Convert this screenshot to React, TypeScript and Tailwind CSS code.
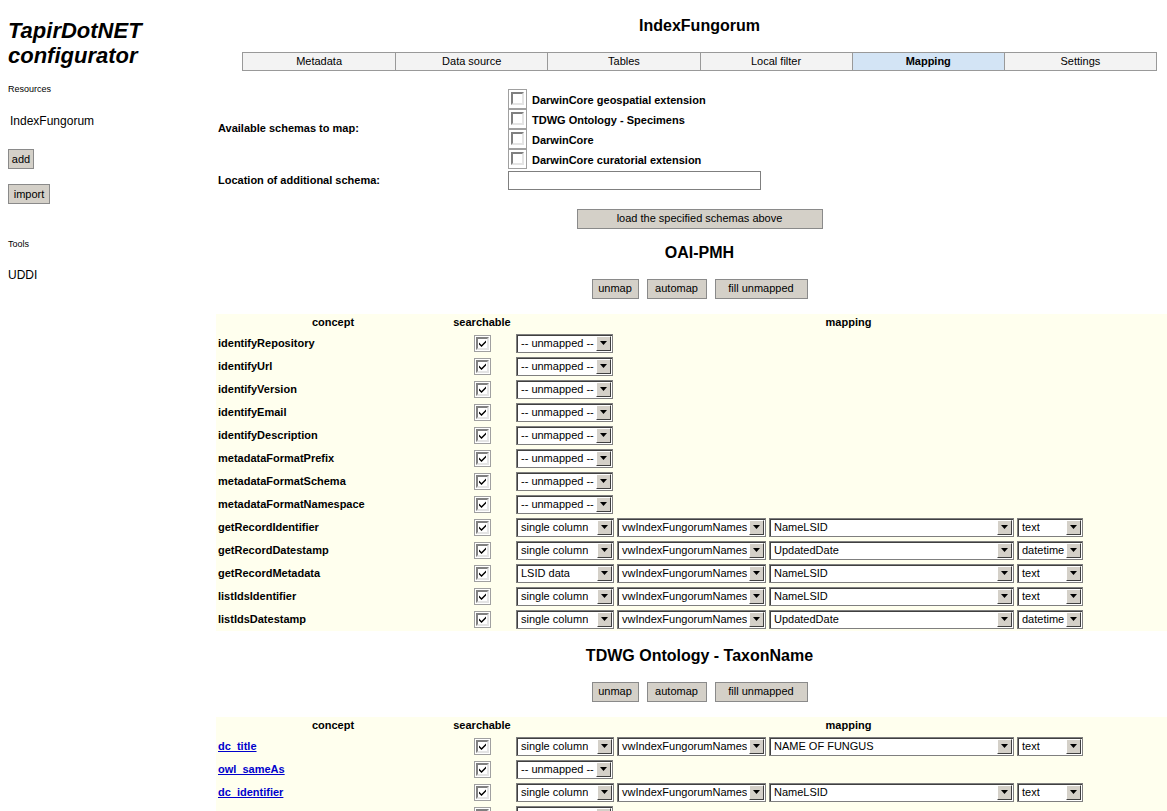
import React from 'react';

type Row = {
  name: string;
  link?: boolean;
  map?: [string, string, string, string];
  empty?: string;
};

const VW = 'vwIndexFungorumNames';

const oaiRows: Row[] = [
  { name: 'identifyRepository' },
  { name: 'identifyUrl' },
  { name: 'identifyVersion' },
  { name: 'identifyEmail' },
  { name: 'identifyDescription' },
  { name: 'metadataFormatPrefix' },
  { name: 'metadataFormatSchema' },
  { name: 'metadataFormatNamespace' },
  { name: 'getRecordIdentifier', map: ['single column', VW, 'NameLSID', 'text'] },
  { name: 'getRecordDatestamp', map: ['single column', VW, 'UpdatedDate', 'datetime'] },
  { name: 'getRecordMetadata', map: ['LSID data', VW, 'NameLSID', 'text'] },
  { name: 'listIdsIdentifier', map: ['single column', VW, 'NameLSID', 'text'] },
  { name: 'listIdsDatestamp', map: ['single column', VW, 'UpdatedDate', 'datetime'] },
];

// last row sits at the bottom edge of the window, only its controls' tops show
const taxonRows: Row[] = [
  { name: 'dc_title', link: true, map: ['single column', VW, 'NAME OF FUNGUS', 'text'] },
  { name: 'owl_sameAs', link: true },
  { name: 'dc_identifier', link: true, map: ['single column', VW, 'NameLSID', 'text'] },
  { name: '', link: true, empty: '' },
];

const tabs = ['Metadata', 'Data source', 'Tables', 'Local filter', 'Mapping', 'Settings'];
const schemas = [
  'DarwinCore geospatial extension',
  'TDWG Ontology - Specimens',
  'DarwinCore',
  'DarwinCore curatorial extension',
];

function CheckMark() {
  return (
    <svg width="7" height="7" viewBox="0 0 7 7">
      <path d="M0 2.5L2.5 5L7 0.5V2.5L2.5 7L0 4.5Z" fill="#000" />
    </svg>
  );
}

function Checkbox({ checked }: { checked?: boolean }) {
  return (
    <span className="flex h-[17px] w-[17px] items-center justify-center border border-[#a0a0a0] bg-white">
      <span className="flex h-[13px] w-[13px] items-center justify-center border-2 border-t-[#808080] border-l-[#808080] border-r-[#e4e4e4] border-b-[#e4e4e4] bg-white">
        {checked && <CheckMark />}
      </span>
    </span>
  );
}

function Select({ value, w }: { value: string; w: string }) {
  return (
    <div className={`flex h-[19px] shrink-0 items-center border border-[#7f7f7f] bg-white shadow-[inset_1px_1px_0_#404040] ${w}`}>
      <span className="truncate pl-[4px] text-[11px] leading-none text-black">{value}</span>
      <span className="ml-auto mr-[1px] flex h-[15px] w-[15px] shrink-0 items-center justify-center border border-t-white border-l-white border-r-[#404040] border-b-[#404040] bg-[#d4d0c8]">
        <svg width="7" height="4" viewBox="0 0 7 4">
          <path d="M0 0H7L3.5 4Z" fill="#000" />
        </svg>
      </span>
    </div>
  );
}

function Button({ label, w }: { label: string; w: string }) {
  return (
    <button className={`h-[20px] border border-[#8a8a8a] bg-[#d4d0c8] text-[11px] text-black ${w}`}>
      {label}
    </button>
  );
}

function MappingTable({ rows }: { rows: Row[] }) {
  return (
    <div className="mt-[15px] bg-[#ffffee]">
      <div className="grid h-[18px] grid-cols-[234px_64px_1fr] items-center text-[11px] font-bold text-black">
        <span className="text-center">concept</span>
        <span className="text-center">searchable</span>
        <span className="text-center">mapping</span>
      </div>
      {rows.map((r, i) => (
        <div key={i} className="grid h-[23px] grid-cols-[234px_64px_1fr] items-center">
          <span className="pl-[2px] text-[11px] font-bold">
            {r.link ? <a href="#" className="text-[#0000cc] underline">{r.name}</a> : r.name}
          </span>
          <span className="flex justify-center">
            <Checkbox checked />
          </span>
          <div className="flex items-center gap-[3px] pl-[2px]">
            {r.map ? (
              <>
                <Select value={r.map[0]} w="w-[98px]" />
                <Select value={r.map[1]} w="w-[149px]" />
                <Select value={r.map[2]} w="w-[245px]" />
                <Select value={r.map[3]} w="w-[66px]" />
              </>
            ) : (
              <Select value={r.empty ?? '-- unmapped --'} w="w-[97px]" />
            )}
          </div>
        </div>
      ))}
    </div>
  );
}

function Section({ title, rows }: { title: string; rows: Row[] }) {
  return (
    <>
      <h2 className="h-[20px] text-center text-[16px] font-bold leading-[20px]">{title}</h2>
      <div className="mt-[16px] flex justify-center gap-[8px]">
        <Button label="unmap" w="w-[47px]" />
        <Button label="automap" w="w-[60px]" />
        <Button label="fill unmapped" w="w-[93px]" />
      </div>
      <MappingTable rows={rows} />
    </>
  );
}

export default function App() {
  return (
    <div className="flex h-[811px] w-full overflow-hidden bg-white font-['Liberation_Sans',Arial,sans-serif] text-black">
      {/* Sidebar */}
      <div className="flex w-[216px] shrink-0 flex-col items-start pl-[8px]">
        <h1 className="mt-[18px] text-[22px] font-bold italic leading-[25px]">
          TapirDotNET
          <br />
          configurator
        </h1>
        <div className="mt-[15px] text-[9px] leading-[12px]">Resources</div>
        <div className="mt-[18px] pl-[2px] text-[12px] leading-[16px]">IndexFungorum</div>
        <Button label="add" w="mt-[20px] w-[26px]" />
        <Button label="import" w="mt-[15px] w-[42px]" />
        <div className="mt-[34px] text-[9px] leading-[12px]">Tools</div>
        <div className="mt-[17px] text-[12px] leading-[16px]">UDDI</div>
      </div>

      {/* Main */}
      <div className="flex w-[967px] shrink-0 flex-col pt-[16px]">
        <h2 className="h-[20px] text-center text-[16px] font-bold leading-[20px]">IndexFungorum</h2>

        <div className="mx-[26px] mt-[16px] grid h-[19px] grid-cols-6 border border-[#999999]">
          {tabs.map((t, i) => (
            <div
              key={t}
              className={`flex items-center justify-center text-[11px] ${i > 0 ? 'border-l border-[#999999]' : ''} ${
                t === 'Mapping' ? 'bg-[#d3e4f5] font-bold' : 'bg-[#f3f3f3]'
              }`}
            >
              {t}
            </div>
          ))}
        </div>

        {/* Schema form */}
        <div className="mt-[18px] grid grid-cols-[292px_1fr] text-[11px] font-bold">
          <div className="flex items-center pl-[2px]">Available schemas to map:</div>
          <div className="flex flex-col">
            {schemas.map((s) => (
              <div key={s} className="flex h-[20px] items-center gap-[5px]">
                <span className="flex h-[20px] w-[19px] items-start border border-[#a0a0a0] bg-white p-[2px]">
                  <span className="h-[13px] w-[13px] border-2 border-t-[#808080] border-l-[#808080] border-r-[#e4e4e4] border-b-[#e4e4e4] bg-white" />
                </span>
                <span className="pt-[4px]">{s}</span>
              </div>
            ))}
          </div>
          <div className="mt-[1px] flex h-[22px] items-center pl-[2px]">Location of additional schema:</div>
          <div className="mt-[1px] flex h-[22px] items-center">
            <input className="h-[19px] w-[253px] border border-[#7f7f7f] bg-white outline-none" />
          </div>
        </div>

        <div className="mt-[17px] flex justify-center">
          <Button label="load the specified schemas above" w="w-[246px]" />
        </div>

        <div className="mt-[14px]" />
        <Section title="OAI-PMH" rows={oaiRows} />
        <div className="mt-[15px]" />
        <Section title="TDWG Ontology - TaxonName" rows={taxonRows} />
      </div>
    </div>
  );
}
